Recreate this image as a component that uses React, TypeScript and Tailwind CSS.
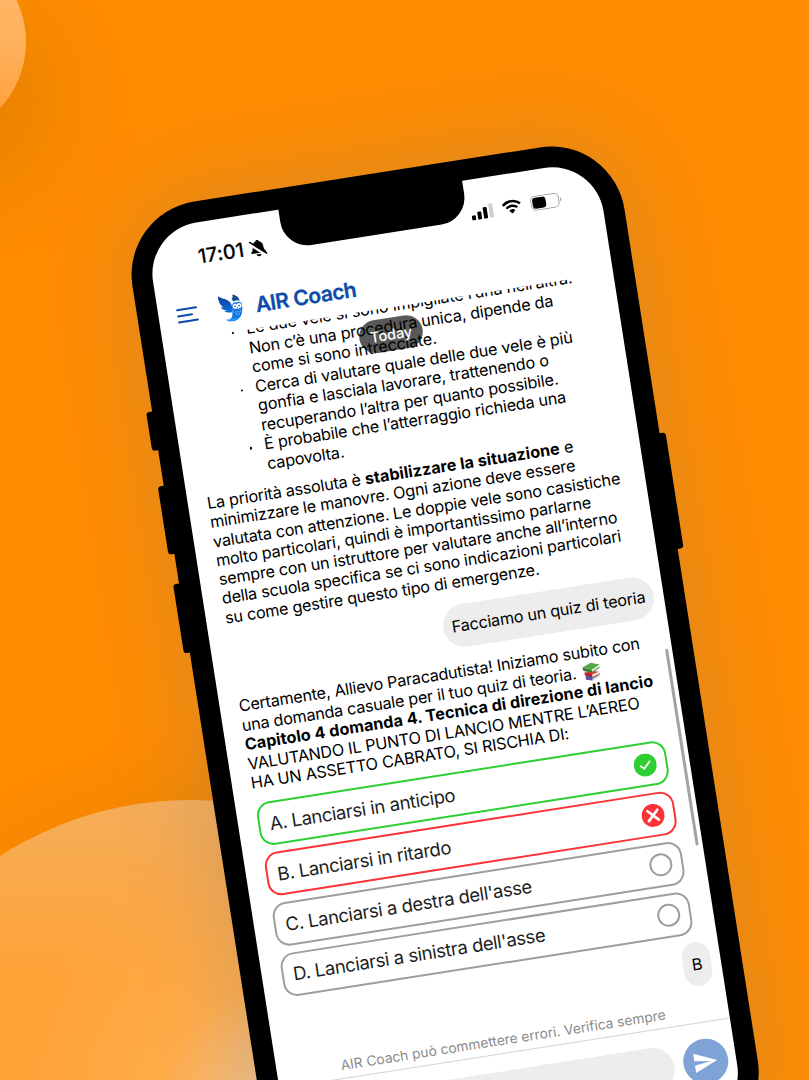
import React from "react";

type OptionState = "correct" | "wrong" | "idle";

const bullets: string[][] = [
  ["Le due vele si sono impigliate l’una nell’altra.", "Non c’è una procedura unica, dipende da", "come si sono intrecciate."],
  ["Cerca di valutare quale delle due vele è più", "gonfia e lasciala lavorare, trattenendo o", "recuperando l’altra per quanto possibile."],
  ["È probabile che l’atterraggio richieda una", "capovolta."],
];

const options: { label: string; state: OptionState }[] = [
  { label: "A. Lanciarsi in anticipo", state: "correct" },
  { label: "B. Lanciarsi in ritardo", state: "wrong" },
  { label: "C. Lanciarsi a destra dell'asse", state: "idle" },
  { label: "D. Lanciarsi a sinistra dell'asse", state: "idle" },
];

const borders: Record<OptionState, string> = {
  correct: "border-[#2fcf33]",
  wrong: "border-[#fb3236]",
  idle: "border-[#9e9e9e]",
};

function BellOff() {
  return (
    <svg className="h-[18px] w-[18px]" viewBox="0 0 18 18">
      <path d="M9 .8c1 0 1.700.6 1.800 1.400 2.400.8 3.600 2.600 3.600 4.900 0 3.300.8 4.300 1.900 5.300.6.6.3 1.500-.5 1.500H2.200c-.8 0-1.100-.9-.5-1.500 1.100-1 1.900-2 1.900-5.300 0-2.300 1.200-4.100 3.600-4.900C7.300 1.400 8 .8 9 .8z" fill="#000" />
      <path d="M6.500 15h5c-.2 1.300-1.200 2.100-2.500 2.100S6.700 16.300 6.500 15z" fill="#000" />
      <path d="M1 3.500 15.800 16.300" stroke="#fff" strokeWidth="3" />
      <path d="M1.400 2 16.800 15.200" stroke="#000" strokeWidth="1.500" strokeLinecap="round" />
    </svg>
  );
}

function Signal() {
  return (
    <svg className="h-[15px] w-[23px]" viewBox="0 0 23 15">
      <rect x="0" y="10" width="4" height="5" rx="1" />
      <rect x="6" y="7" width="4" height="8" rx="1" />
      <rect x="12" y="3.500" width="4" height="11.500" rx="1" />
      <rect x="18" y="0.500" width="4" height="14.500" rx="1" fill="#cfcfcf" />
    </svg>
  );
}

function Wifi() {
  return (
    <svg className="h-[15px] w-[20px]" viewBox="0 0 20 15" fill="none" stroke="#000">
      <path d="M1.300 5.200a12.500 12.500 0 0 1 17.400 0" strokeWidth="2.500" />
      <path d="M4.500 8.500a8 8 0 0 1 11 0" strokeWidth="2.400" />
      <path d="M10 14.200 6.900 11a4.500 4.500 0 0 1 6.200 0z" fill="#000" stroke="none" />
    </svg>
  );
}

function Battery() {
  return (
    <svg className="h-[15px] w-[32px]" viewBox="0 0 32 15">
      <rect x="0.500" y="0.500" width="28" height="14" rx="4.500" fill="none" stroke="#a3a3a3" />
      <rect x="2" y="2" width="13.500" height="11" rx="3" />
      <path d="M30 5.300c.8.300 1.300 1.200 1.300 2.200s-.5 1.900-1.300 2.200z" fill="#a3a3a3" />
    </svg>
  );
}

function Owl() {
  return (
    <svg className="h-[30px] w-[28px]" viewBox="0 0 28 30">
      <defs>
        <linearGradient id="wing" x1="0" y1="0" x2="0" y2="1">
          <stop offset="0" stopColor="#0b3f94" />
          <stop offset="1" stopColor="#0d6fe0" />
        </linearGradient>
      </defs>
      <path d="M1.800 1.200c2.500 2.600 6.500 3.200 9.400 5.700 2.700 2.400 3.500 5.600 3 8.900-.3 2-1.200 3.600-1.200 3.600-2.600-.1-5.400-.6-7.100-2.400 1 .1 1.900 0 2.600-.3-2.600-.6-4.700-2.200-5.500-4.400.9.500 1.800.6 2.600.5C3.100 10.900 1.300 7.200 1.800 1.200z" fill="url(#wing)" />
      <path d="M16.200 1.800c4.200 1.400 6.500 3.900 6.300 7.300-1.200-.8-2.400-1.100-3.800-1-.9.100-1.500.3-2.200.8-.4-1.200-.9-2-1.800-2.900 1.500-.5 2.100-1.900 1.500-4.200z" fill="#16508c" />
      <path d="M14.600 12c.8-2 2.600-2.700 4.600-1.700 1.600-.9 4.200-.4 5 1.300.5 5.600-.6 12.700-6 15.400-3.600 1.800-8.200 1.600-11.600-.5 2.400.1 4.200-.6 5.400-2 2.400-2.800 1.400-8.100 2.600-12.500z" fill="#1478e8" />
      <path d="M14.900 12.600c1.200-1.700 3.100-1.700 4.500-.5 1.300-1.200 3.300-1.100 4.300.4.600 2.700-1.100 4.300-2.700 3.600-1 .8-2.100.8-3 0-2 .6-3.500-1-3.100-3.500z" fill="#fff" />
      <circle cx="17.300" cy="13.800" r=".8" fill="#12539e" />
      <circle cx="21.400" cy="13.800" r=".8" fill="#12539e" />
      <path d="m18.700 15 .7 1.500.8-1.500z" fill="#12539e" />
      <path d="M16.600 19v1.100m2.800-.9v1.100m2.300-1.700v1.100m-3.800 1.800v1.100m2.500-1.200v1" stroke="#d8eaff" strokeWidth=".8" />
      <path d="M5.800 25.500c2.600 1 4.700-.4 7 .3 1.700.5 3.500.4 5 0-1.200 1.700-3 2.600-4.800 2.500l.5-1.200-2 1.200-.3-1.200-1.800 1-.2-1.200c-1.300.1-2.500-.4-3.400-1.400z" fill="#2c98ff" />
    </svg>
  );
}

function Books() {
  return (
    <svg className="mb-[-1px] ml-[5.500px] inline-block h-[20px] w-[20px] align-bottom" viewBox="0 0 20 20">
      <path d="m3 14 9-1.500 6 2.500-8.500 3.500-6-1.500z" fill="#2f5f9e" />
      <path d="m9.500 17 8.500-3v1.500l-8.500 3z" fill="#e9e3e6" />
      <path d="m3 14.500 6.500 2v2.300l-6-1.600z" fill="#6b4fa0" />
      <path d="m2.500 10 8-1 7.500 2.500-8 3z" fill="#d8343a" />
      <path d="m2.500 10 7.500 2.500v3L3 13z" fill="#b81f2c" />
      <path d="m10 12.800 8-2v2.700l-8 2.600z" fill="#f1e4e2" />
      <path d="m10 15.300 8-2.600v.9l-8 2.600z" fill="#d8343a" />
      <path d="M1.500 4.500 10.500 1l8.500 3-8.500 4.200z" fill="#56a845" />
      <path d="m1.500 4.500 9 3.700v3L2 8z" fill="#3a7f33" />
      <path d="m10.500 8.400 8-3.700v2.200l-8 3.900z" fill="#e6e8dc" />
      <path d="m10.500 10.200 8-3.800v.9l-8 3.900z" fill="#3f8a37" />
    </svg>
  );
}

function StateMark({ state }: { state: OptionState }) {
  if (state === "idle") return <span className="size-[23px] rounded-full border-[2.3px] border-[#9e9e9e]" />;
  return (
    <svg className="size-[23px]" viewBox="0 0 23 23" fill="none" stroke="#fff" strokeLinecap="round" strokeLinejoin="round">
      <circle cx="11.500" cy="11.500" r="11.500" stroke="none" fill={state === "correct" ? "#2fcf33" : "#fb3236"} />
      {state === "correct" ? (
        <path d="m6.800 11.900 3.200 3.200 6.400-6.600" strokeWidth="1.700" />
      ) : (
        <path d="m6.500 6.500 10 10m0-10-10 10" strokeWidth="2.700" />
      )}
    </svg>
  );
}

function Header() {
  return (
    <header className="relative z-10 h-[113px] shrink-0">
      <div className="flex h-[66px] items-center pl-[47.700px]">
        <span className="w-[50px] pt-[1.500px] text-[19.800px] font-medium tracking-[0.100px] [-webkit-text-stroke:0.200px_#000]">17:01</span>
        <span className="ml-[1.500px] mt-[1.500px]"><BellOff /></span>
        <div className="ml-auto flex items-center gap-[8.500px] pr-[39.500px]">
          <Signal />
          <Wifi />
          <Battery />
        </div>
      </div>
      <div className="flex h-[47px] items-center pl-[17px] text-[#0a4bab]">
        <svg className="h-[18px] w-[22px]" viewBox="0 0 22 18" stroke="currentColor" strokeWidth="2" strokeLinecap="round">
          <path d="M1.500 2.800h19M1.500 9h14M1.500 15.200h19" />
        </svg>
        <span className="ml-[20.500px]"><Owl /></span>
        <h1 className="ml-[9.500px] text-[21px] font-semibold leading-none tracking-[-0.450px] [-webkit-text-stroke:0.300px_#0a4bab]">AIR Coach</h1>
      </div>
    </header>
  );
}

function Chat() {
  return (
    <main className="h-[733.500px] shrink-0 overflow-hidden pl-[18.400px] text-[16.200px] tracking-[-0.200px] text-black">
      <ul className="mt-[-10.700px] leading-[19.500px]">
        {bullets.map((lines) => (
          <li key={lines[0]} className="flex">
            <span className="ml-[50.500px] mt-[10px] size-[2.400px] shrink-0 rounded-full bg-black" />
            <div className="ml-[12.600px] tracking-[-0.180px]">
              {lines.map((line) => <span key={line} className="block">{line}</span>)}
            </div>
          </li>
        ))}
      </ul>
      <p className="mt-[10.800px] leading-[19.300px]">
        La priorità assoluta è <b className="tracking-[0.070px]">stabilizzare la situazione</b> e<br />
        minimizzare le manovre. Ogni azione deve essere<br />
        valutata con attenzione. Le doppie vele sono casistiche<br />
        molto particolari, quindi è importantissimo parlarne<br />
        sempre con un istruttore per valutare anche all’interno<br />
        della scuola specifica se ci sono indicazioni particolari<br />
        su come gestire questo tipo di emergenze.
      </p>
      <div className="mr-[9.700px] mt-[13px] flex justify-end">
        <div className="flex h-[43px] w-[213.500px] items-center justify-center rounded-full bg-[#ededed]">Facciamo un quiz di teoria</div>
      </div>
      <div className="mt-[14.300px] leading-[19.500px]">
        <span className="block">Certamente, Allievo Paracadutista! Iniziamo subito con</span>
        <span className="block h-[19.500px]">una domanda casuale per il tuo quiz di teoria.<Books /></span>
        <b className="block tracking-[0.070px]">Capitolo 4 domanda 4. Tecnica di direzione di lancio</b>
        <span className="block">VALUTANDO IL PUNTO DI LANCIO MENTRE L’AEREO</span>
        <span className="block">HA UN ASSETTO CABRATO, SI RISCHIA DI:</span>
      </div>
      <div className="ml-[1px] mt-[10.100px] flex w-[413.600px] flex-col gap-[6.600px]">
        {options.map(({ label, state }) => (
          <div key={label} className={`flex h-[44.300px] items-center justify-between rounded-[14px] border-[2.300px] pl-[9.300px] pr-[9px] text-[18.500px] tracking-[-0.390px] text-[#1f1f1f] ${borders[state]}`}>
            <span className="pt-[1px]">{label}</span>
            <StateMark state={state} />
          </div>
        ))}
      </div>
      <div className="mr-[9.700px] mt-[8.300px] flex justify-end">
        <div className="flex h-[43.500px] w-[28.700px] items-center justify-center rounded-full bg-[#ededed]">B</div>
      </div>
    </main>
  );
}

function Footer() {
  return (
    <footer>
      <p className="h-[22px] border-b border-[#d4d4d4] pl-[63.500px] text-[13.800px] leading-[17px] text-[#8b8b8b]">
        AIR Coach può commettere errori. Verifica sempre
      </p>
      <div className="flex items-center pl-[30px] pt-[16px]">
        <div className="h-[44px] w-[363px] rounded-full bg-[#ededed]" />
        <div className="ml-[9.500px] flex size-[44.400px] items-center justify-center rounded-full bg-[#7fa3d7]">
          <svg className="size-[26px]" viewBox="0 0 24 24" fill="#fff">
            <path d="M2.010 21L23 12 2.010 3 2 10l15 2-15 2z" />
          </svg>
        </div>
      </div>
    </footer>
  );
}

export default function App() {
  return (
    <div className="relative h-[1080px] w-[809px] overflow-hidden bg-[#ff8c00] font-['Inter','Liberation_Sans',sans-serif]">
      <div className="absolute left-[-167.600px] top-[-54.800px] size-[193.600px] rounded-full bg-[linear-gradient(170deg,#ffb96c_20%,#ffb05a_60%,#ff9c35_95%)] shadow-[30px_56px_90px_rgba(140,90,0,0.200)]" />
      <div className="absolute left-[-160px] top-[800px] size-[700px] rounded-full bg-[linear-gradient(180deg,rgba(243,176,98,0.8)_0%,rgba(250,176,90,0)_26%),radial-gradient(circle_at_66%_46%,#f2c48e_0%,#f6c084_10%,#ffab48_25%,#ffa236_50%)] shadow-[20px_0px_80px_rgba(120,80,0,0.160)]" />

      <div className="absolute left-[121.300px] top-[212.800px] h-[1010px] w-[498px] origin-top-left rotate-[-8.900deg]">
        <div className="absolute left-[-6px] top-[201px] h-[39px] w-[12px] rounded-[3px] bg-black" />
        <div className="absolute left-[-6px] top-[276px] h-[69px] w-[12px] rounded-[3px] bg-black" />
        <div className="absolute left-[-6px] top-[375px] h-[70px] w-[12px] rounded-[3px] bg-black" />
        <div className="absolute right-[-5.500px] top-[301px] h-[117px] w-[12px] rounded-[3px] bg-black" />
        <div className="h-full w-full rounded-[74px] bg-black p-[21px] shadow-[0_0_90px_rgba(128,128,128,0.320)]">
          <div className="relative h-full">
            <div className="flex h-full flex-col overflow-hidden rounded-[52px] bg-white pl-[0.700px] pt-[0.900px]">
              <Header />
              <Chat />
              <Footer />
            </div>
            <div className="absolute left-[134.500px] top-[-4px] z-20 h-[44px] w-[186px] rounded-b-[27px] bg-black" />
            <div className="absolute left-[195px] top-[124px] z-20 flex h-[33px] w-[64px] items-center justify-center rounded-full bg-black/65 pt-[1px] text-[14.500px] font-medium text-white">Today</div>
            <div className="absolute left-[448.500px] top-[494px] z-20 h-[199px] w-[3.500px] rounded-full bg-[#a3a3a3]" />
          </div>
        </div>
      </div>
    </div>
  );
}
